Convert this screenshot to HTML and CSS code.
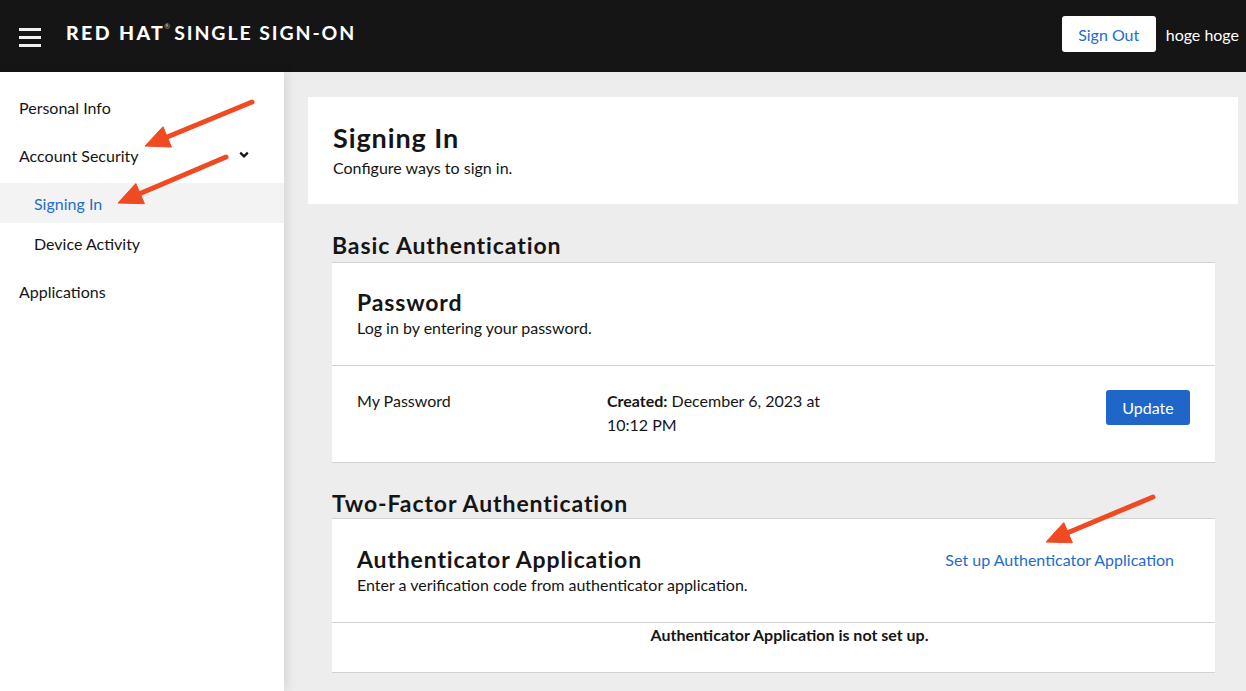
FILE: index.html
```html
<!DOCTYPE html>
<html lang="en">
<head>
<meta charset="utf-8">
<title>Signing In</title>
<link rel="stylesheet" href="styles.css">
</head>
<body>
<header class="masthead">
  <div class="brand">
    <span class="burger"><span></span><span></span><span></span></span>
    <span class="logo"><span class="logo-rh">RED HAT</span><span class="logo-reg">®</span><span class="logo-prod">SINGLE SIGN-ON</span></span>
  </div>
  <div class="tools">
    <button class="btn-signout">Sign Out</button>
    <span class="user">hoge hoge</span>
  </div>
</header>
<div class="body">
  <nav class="sidebar">
    <ul class="nav">
      <li class="nav-item">Personal Info</li>
      <li class="nav-item nav-group">Account Security
        <svg class="chev" width="10" height="8" viewBox="0 0 10 8"><path d="M1.2 1.6 L5 5.4 L8.8 1.6" fill="none" stroke="#151515" stroke-width="2.2"/></svg>
      </li>
      <li class="sub">
        <ul class="subnav">
          <li class="nav-item subitem current">Signing In</li>
          <li class="nav-item subitem">Device Activity</li>
        </ul>
      </li>
      <li class="nav-item">Applications</li>
    </ul>
  </nav>
  <main class="main">
    <section class="page-head">
      <h1 class="title">Signing In</h1>
      <p class="subtitle">Configure ways to sign in.</p>
    </section>
    <section class="content">
      <h2 class="section-title first">Basic Authentication</h2>
      <div class="card">
        <div class="card-head">
          <div>
            <h3 class="card-title">Password</h3>
            <p class="card-desc">Log in by entering your password.</p>
          </div>
        </div>
        <div class="row">
          <div class="cell-name">My Password</div>
          <div class="cell-date"><strong>Created:</strong> December 6, 2023 at 10:12 PM</div>
          <div class="cell-action"><button class="btn-primary">Update</button></div>
        </div>
      </div>
      <h2 class="section-title">Two-Factor Authentication</h2>
      <div class="card">
        <div class="card-head card-head-2">
          <div>
            <h3 class="card-title">Authenticator Application</h3>
            <p class="card-desc">Enter a verification code from authenticator application.</p>
          </div>
          <button class="btn-link">Set up Authenticator Application</button>
        </div>
        <div class="row-empty">Authenticator Application is not set up.</div>
      </div>
    </section>
  </main>
</div>
<svg class="annotations" width="1246" height="691" viewBox="0 0 1246 691">
  <g fill="#ef4a22" stroke="#ef4a22">
    <line x1="252" y1="102" x2="166" y2="137.5" stroke-width="5" stroke-linecap="round"/>
    <polygon points="145,146 171.4,147.1 163,126.7" stroke-width="1" stroke-linejoin="round"/>
    <line x1="226" y1="157" x2="139" y2="194" stroke-width="5" stroke-linecap="round"/>
    <polygon points="118,203 144.4,203.7 135.8,183.5" stroke-width="1" stroke-linejoin="round"/>
    <line x1="1153" y1="497" x2="1067" y2="533" stroke-width="5" stroke-linecap="round"/>
    <polygon points="1046,542 1072.4,542.8 1063.8,522.6" stroke-width="1" stroke-linejoin="round"/>
  </g>
</svg>
</body>
</html>
```

FILE: styles.css
```css
* { box-sizing: border-box; }
html, body { margin: 0; padding: 0; }
body {
  font-family: Lato, "Liberation Sans", sans-serif;
  font-size: 16px;
  color: #151515;
  width: 1246px;
  height: 691px;
  overflow: hidden;
  position: relative;
  background: #ededed;
}
ul { list-style: none; margin: 0; padding: 0; }
h1, h2, h3, p { margin: 0; }
button { font-family: inherit; cursor: pointer; }

.masthead {
  height: 72px;
  background: #151515;
  display: flex;
  align-items: center;
  justify-content: space-between;
  padding: 0 7px 0 19px;
}
.brand { display: flex; align-items: center; }
.burger {
  width: 22px;
  display: flex;
  flex-direction: column;
  gap: 4.5px;
  margin-top: 3px;
}
.burger span { display: block; height: 3.5px; background: #f0f0f0; }
.logo {
  margin-left: 25px;
  color: #fff;
  font-size: 19.5px;
  letter-spacing: 1.9px;
  display: flex;
  align-items: flex-start;
  margin-top: -8px;
}
.logo-rh { font-weight: 900; letter-spacing: 2.4px; }
.logo-reg { font-size: 7px; margin: 1px 4px 0 -1px; color: #ccc; letter-spacing: 0; }
.logo-prod { font-weight: 700; }
.tools { display: flex; align-items: center; margin-top: -4px; }
.btn-signout {
  width: 94px;
  height: 36px;
  background: #fff;
  border: 0;
  border-radius: 3px;
  color: #1f6ccc;
  font-size: 16px;
}
.user { color: #fff; margin-left: 10px; font-size: 16px; }

.body { display: flex; height: 619px; }
.sidebar {
  width: 284px;
  flex: none;
  background: #fff;
  box-shadow: 3px 0 10px rgba(0,0,0,0.10);
  position: relative;
  z-index: 1;
  padding-top: 15px;
}
.nav-item {
  height: 40px;
  display: flex;
  align-items: center;
  padding-left: 19px;
  margin-bottom: 8px;
}
.nav-group { justify-content: space-between; padding-right: 35px; }
.chev { margin-top: -1px; }
.subitem { padding-left: 34px; margin-bottom: 0; }
.sub { margin-bottom: 8px; }
.current { background: #f3f3f3; color: #1f6ccc; }

.main {
  flex: 1;
  padding: 25px 8px 0 24px;
}
.page-head {
  background: #fff;
  padding: 26px 25px 24px;
}
.title { font-size: 27px; font-weight: 700; line-height: 30px; letter-spacing: 0.9px; }
.subtitle { line-height: 24px; margin-top: 3px; }

.content { padding: 0 23px 0 24px; }
.section-title {
  font-size: 23px;
  font-weight: 700;
  line-height: 30px;
  letter-spacing: 0.9px;
  margin: 25px 0 0;
}
.section-title.first { margin-top: 26px; margin-bottom: 2px; }
.card {
  background: #fff;
  border-top: 1px solid #d2d2d2;
  border-bottom: 1px solid #d2d2d2;
}
.card-head {
  display: flex;
  justify-content: space-between;
  align-items: flex-start;
  padding: 25px 25px 25px 25px;
  border-bottom: 1px solid #d2d2d2;
}
.card-head-2 { padding-top: 26px; }
.card-title { font-size: 23px; font-weight: 700; line-height: 28px; letter-spacing: 0.85px; }
.card-desc { line-height: 24px; }
.btn-link {
  background: none;
  border: 0;
  color: #1f6ccc;
  font-size: 16px;
  line-height: 24px;
  padding: 3px 16px;
  margin-top: 0;
}
.row {
  display: flex;
  align-items: flex-start;
  padding: 23px 25px 25px;
  line-height: 24px;
}
.cell-name { width: 250px; flex: none; }
.cell-date { width: 232px; flex: none; }
.cell-action { flex: 1; display: flex; justify-content: flex-end; }
.btn-primary {
  margin-top: 1px;
  height: 35px;
  width: 84px;
  background: #1f66c8;
  color: #fff;
  border: 0;
  border-radius: 3px;
  font-size: 16px;
}
.row-empty {
  font-weight: 700;
  line-height: 24px;
  text-align: center;
  padding: 0 25px 25px 57px;
}
.annotations {
  position: absolute;
  left: 0;
  top: 0;
  pointer-events: none;
  z-index: 5;
}
```
